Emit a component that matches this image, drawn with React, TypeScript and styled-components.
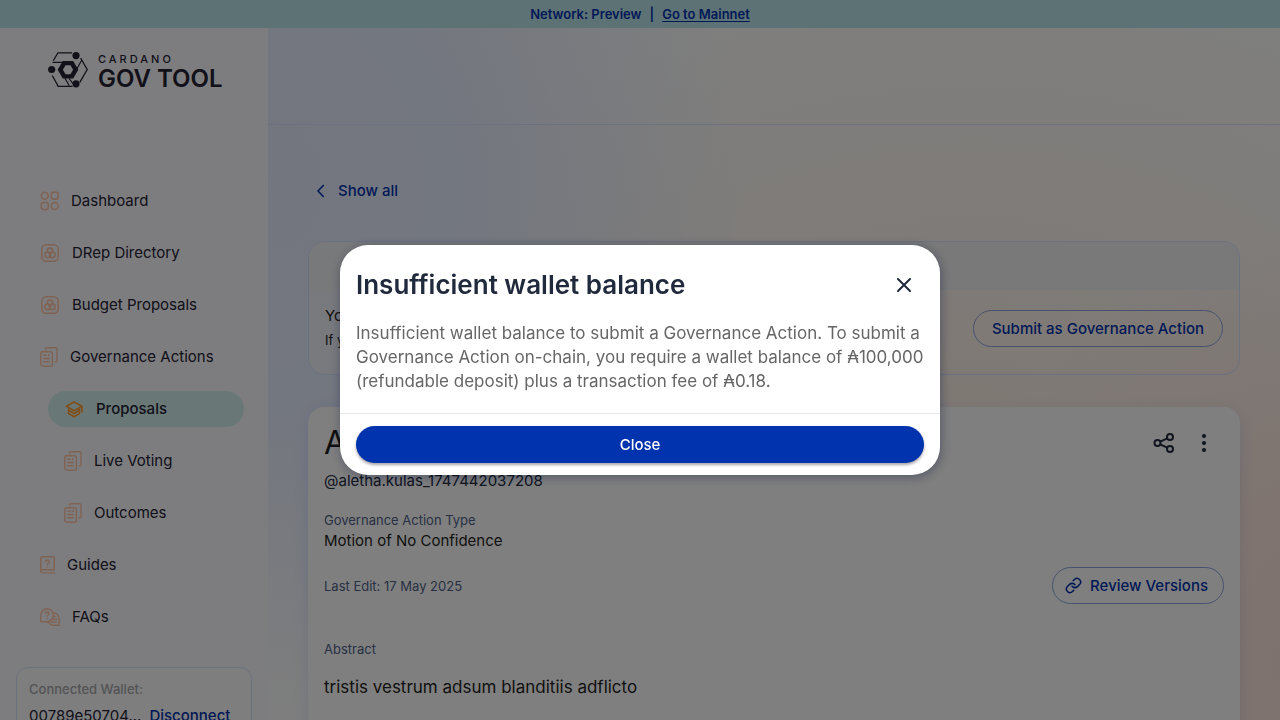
import React from "react";
import styled, { createGlobalStyle, css } from "styled-components";

const color = {
  blue: "#0033ad",
  ink: "#212a3d",
  text: "#242232",
  black: "#1f1f22",
  label: "#506288",
  line: "#d6e2ff",
  peach: "#ffc4a3",
};

const GlobalStyle = createGlobalStyle`
  *, *::before, *::after { box-sizing: border-box; }
  body {
    margin: 0;
    overflow: hidden;
    font-family: Inter, "Liberation Sans", sans-serif;
    font-size: 15px;
    line-height: 20px;
    color: ${color.text};
  }
  h1, h2, p, dl, dt, dd, ul { margin: 0; padding: 0; }
  ul { list-style: none; }
  button { font-family: inherit; cursor: pointer; }
  svg { display: block; flex: none; }
`;

const Page = styled.div`
  height: 100vh;
  display: flex;
  flex-direction: column;
  background:
    radial-gradient(ellipse 38% 76% at 20% 26%, #e6edff 0%, #e7eeff 42%, rgba(240, 245, 255, 0) 100%),
    radial-gradient(ellipse 30% 60% at 104% 92%, #ffe4dc 0%, #ffe8df 35%, rgba(255, 244, 238, 0) 100%),
    radial-gradient(ellipse 52% 60% at 76% 58%, #fff2e8 0%, rgba(255, 250, 246, 0) 100%),
    #fefefd;
`;

const Banner = styled.div`
  flex: none;
  height: 28px;
  display: flex;
  align-items: center;
  justify-content: center;
  gap: 8px;
  background: #bbe4eb;
  color: ${color.blue};
  font-size: 13px;
  font-weight: 600;
`;

const BannerLink = styled.a`
  color: inherit;
  text-underline-offset: 2px;
`;

const Columns = styled.div`
  flex: 1;
  min-height: 0;
  display: flex;
`;

const Sidebar = styled.aside`
  flex: none;
  width: 268px;
  padding: 24px 16px 16px;
  overflow: hidden;
  background: rgba(251, 251, 255, 0.94);
`;

const Logo = styled.a`
  display: flex;
  gap: 10px;
  height: 36px;
  margin: 0 32px 95px;
  color: ${color.text};
  text-decoration: none;
  white-space: nowrap;
`;

const Wordmark = styled.span`
  display: flex;
  flex-direction: column;
  font-size: 11px;
  font-weight: 500;
  line-height: 14px;
  letter-spacing: 3px;
`;

const WordmarkName = styled.strong`
  font-size: 24px;
  font-weight: 600;
  line-height: 26px;
  letter-spacing: normal;
`;

const NavList = styled.ul`
  display: flex;
  flex-direction: column;
  gap: 16px;
  padding: 0 8px;
`;

const NavLink = styled.a<{ $nested?: boolean; $active?: boolean }>`
  display: flex;
  align-items: center;
  gap: 12px;
  height: 36px;
  padding: 0 16px;
  margin-left: ${(p) => (p.$nested ? 24 : 0)}px;
  border-radius: 18px;
  color: ${color.text};
  text-decoration: none;
  white-space: nowrap;
  ${(p) =>
    p.$active &&
    css`
      background: #d2f0ee;
      font-weight: 500;
    `}
`;

const Wallet = styled.section`
  margin-top: 32px;
  padding: 12px;
  border: 1px solid ${color.line};
  border-radius: 12px;
  background: rgba(255, 255, 255, 0.3);
`;

const WalletLabel = styled.p`
  color: #a8a8a8;
  font-size: 13px;
  font-weight: 500;
  line-height: 18px;
`;

const WalletRow = styled.div`
  display: flex;
  align-items: center;
  gap: 8px;
  padding-top: 8px;
`;

const LinkButton = styled.button`
  display: flex;
  align-items: center;
  gap: 8px;
  padding: 0;
  border: 0;
  background: none;
  color: ${color.blue};
  font-size: 15px;
  font-weight: 500;
  line-height: 20px;
`;

const Main = styled.main`
  flex: 1;
  min-width: 0;
  overflow: hidden;
`;

const TopBar = styled.header`
  height: 97px;
  border-bottom: 1px solid ${color.line};
`;

const Content = styled.div`
  display: flex;
  flex-direction: column;
  align-items: stretch;
  padding: 56px 40px 40px;
`;

const BackRow = styled.div`
  display: flex;
  padding-left: 2px;
  margin-bottom: 40px;
`;

const SubmitCard = styled.section`
  border: 1px solid ${color.line};
  border-radius: 16px;
  overflow: hidden;
  margin-bottom: 32px;
`;

const SubmitStrip = styled.div`
  height: 48px;
  background: rgba(242, 242, 243, 0.9);
`;

const SubmitBody = styled.div`
  display: flex;
  align-items: center;
  justify-content: space-between;
  height: 84px;
  padding: 0 16px 8px;
  background: linear-gradient(90deg, rgba(246, 246, 248, 0.7), rgba(255, 255, 255, 0) 60%);
`;

const SubmitText = styled.div`
  display: flex;
  flex-direction: column;
  gap: 4px;
  color: ${color.black};
`;

const Small = styled.p`
  font-size: 13px;
`;

const OutlineButton = styled.button<{ $withIcon?: boolean }>`
  display: flex;
  align-items: center;
  gap: 8px;
  height: 37px;
  padding: 0 ${(p) => (p.$withIcon ? 15 : 18)}px 0 ${(p) => (p.$withIcon ? 12 : 18)}px;
  border: 1px solid #8ca3dc;
  border-radius: 19px;
  background: none;
  color: ${color.blue};
  font-size: 15px;
  font-weight: 500;
  white-space: nowrap;
`;

const ProposalCard = styled.article`
  min-height: 480px;
  padding: 16px;
  border-radius: 16px;
  background: #ffffff;
  box-shadow: 0 4px 15px rgba(47, 98, 220, 0.14);
`;

const CardRow = styled.div<{ $space?: number }>`
  display: flex;
  align-items: center;
  justify-content: space-between;
  padding-bottom: ${(p) => p.$space ?? 0}px;
`;

const ProposalTitle = styled.h1`
  color: ${color.black};
  font-size: 32px;
  font-weight: 400;
  line-height: 40px;
`;

const Actions = styled.div`
  display: flex;
`;

const IconButton = styled.button`
  display: flex;
  align-items: center;
  justify-content: center;
  width: 40px;
  height: 40px;
  padding: 0;
  border: 0;
  background: none;
  color: ${color.ink};
`;

const Author = styled.p`
  padding: 8px 0 20px;
  color: ${color.ink};
`;

const Facts = styled.dl`
  display: flex;
  flex-direction: column;
  gap: 2px;
  padding-bottom: 16px;
  color: ${color.black};
`;

const Term = styled.dt`
  color: ${color.label};
  font-size: 13px;
  line-height: 18px;
`;

const Label = styled.p`
  color: ${color.label};
  font-size: 13px;
  line-height: 18px;
`;

const Abstract = styled.p`
  padding-top: 17px;
  color: ${color.black};
  font-size: 17px;
  line-height: 24px;
`;

const Backdrop = styled.div`
  position: fixed;
  inset: 0;
  display: flex;
  align-items: center;
  justify-content: center;
  padding: 16px;
  background: rgba(0, 0, 0, 0.5);
`;

const Dialog = styled.div`
  width: 600px;
  max-width: 100%;
  border-radius: 28px;
  background: #ffffff;
  box-shadow: 1px 2px 11px rgba(0, 18, 61, 0.37);
`;

const DialogHead = styled.div`
  display: flex;
  align-items: center;
  justify-content: space-between;
  padding: 20px 16px 16px;
`;

const DialogTitle = styled.h2`
  color: ${color.ink};
  font-size: 26px;
  font-weight: 600;
  line-height: 40px;
`;

const DialogText = styled.p`
  padding: 0 8px 20px 16px;
  color: #666666;
  font-size: 17px;
  line-height: 24px;
`;

const DialogFoot = styled.div`
  padding: 12px 16px;
  border-top: 1px solid #e6e7eb;
`;

const PrimaryButton = styled.button`
  width: 100%;
  height: 37px;
  border: 0;
  border-radius: 19px;
  background: ${color.blue};
  color: #ffffff;
  font-size: 15px;
  font-weight: 500;
  box-shadow: 0 2px 3px rgba(0, 0, 0, 0.35);
`;

const LogoMark = () => (
  <svg width="40" height="36" viewBox="0 0 40 36" fill="none" stroke="currentColor" strokeWidth="1.3" aria-hidden="true">
    <path d="M5.300 8.800 9.900.8H24M32.600 6 39.200 17.500 31.800 30.300M24.500 34.300H10.200L4.300 23.500" />
    <path d="M4.500 10.300H14.500M33.800 8 28.200 18M17 26.300 21.300 33.800M21 26.300 24.800 31.500" strokeWidth="1.200" />
    <path d="M14.800 9H25.200L30.300 17.700 25.200 26.400H14.800L9.700 17.700Z" fill="currentColor" stroke="none" />
    <path d="M17.500 13.200H22.500L25.100 17.700 22.500 22.200H17.500L14.900 17.700Z" fill="#fbfbff" stroke="none" />
    <g fill="currentColor" stroke="none">
      <circle cx="3.700" cy="17.500" r="3.600" />
      <circle cx="28" cy="3.600" r="3.600" />
      <circle cx="28" cy="31.800" r="3.600" />
    </g>
  </svg>
);

const DashboardIcon = () => (
  <svg width="19" height="20" viewBox="0 0 19 20" fill="none" stroke={color.peach} strokeWidth="1.500" aria-hidden="true">
    <circle cx="4.750" cy="4.750" r="3.500" />
    <rect x="11.250" y="1.250" width="7" height="7" rx="2.200" />
    <rect x="1.250" y="11.500" width="7" height="7" rx="2.200" />
    <circle cx="14.750" cy="15" r="3.500" />
  </svg>
);

const CirclesIcon = () => (
  <svg width="20" height="20" viewBox="0 0 20 20" fill="none" stroke={color.peach} strokeWidth="1.500" aria-hidden="true">
    <rect x="1.750" y="1.750" width="16.500" height="16.500" rx="4.500" />
    <circle cx="10" cy="7.600" r="2.700" />
    <circle cx="7.700" cy="11.800" r="2.900" />
    <circle cx="12.300" cy="11.800" r="2.900" />
  </svg>
);

const DocsIcon = () => (
  <svg width="18" height="20" viewBox="0 0 18 20" fill="none" stroke={color.peach} strokeWidth="1.400" strokeLinecap="round" aria-hidden="true">
    <rect x=".8" y="4.700" width="11.600" height="14.500" rx="2" />
    <path d="M5.500 2.500C5.600 1.400 6.300.8 7.300.8H15.200C16.300.8 17 1.500 17 2.600V13.200C17 14.300 16.300 15 15.200 15M3.800 8.300H6M8.300 8.300H9.400M3.800 11.500H9.400M3.800 14.700H9.400" />
  </svg>
);

const LayersIcon = () => (
  <svg width="20" height="20" viewBox="0 0 20 20" fill="none" stroke="#ff9d33" strokeWidth="1.600" strokeLinejoin="round" aria-hidden="true">
    <path d="M2.500 7.300 10 3 18 7.300 10 11.700ZM18 7.300V13.500M4.500 9.500V11.300L10 14.500 15.500 11.300V9.500M4.500 12.300V14.500L10 17.700 15.500 14.500V12.300" />
  </svg>
);

const GuideIcon = () => (
  <svg width="15" height="18" viewBox="0 0 15 18" fill="none" stroke={color.peach} strokeWidth="1.400" strokeLinecap="round" aria-hidden="true">
    <path d="M14.300 13.800V2.200C14.300 1.300 13.800.8 13 .8H2.500C1.400.8.8 1.500.8 2.500V15.200M14.300 13.800H2.500C1.400 13.800.8 14.400.8 15.300S1.400 16.900 2.500 16.900H14.300" />
    <path d="M5.600 5.600C5.600 3.400 9.500 3.400 9.500 5.600 9.500 7.200 7.500 7 7.500 8.700M7.500 10.700V10.900" />
  </svg>
);

const FaqIcon = () => (
  <svg width="20" height="18" viewBox="0 0 20 18" fill="none" stroke={color.peach} strokeWidth="1.400" strokeLinecap="round" strokeLinejoin="round" aria-hidden="true">
    <path d="M.8 13.700V7A6.200 6.200 0 0 1 13.200 7 6.400 6.400 0 0 1 7 13.700ZM5.200 5.600C5.200 3.400 9 3.400 9 5.600 9 7.100 7.100 7 7.100 8.500M7.100 10.500V10.700" />
    <path d="M13.400 4.700A6.200 6.200 0 0 1 19.200 11V17.200H13.500A6 6 0 0 1 8.300 14M13.500 8.500H15.700M12.700 11.200H16.500M11.500 14H16.500" />
  </svg>
);

const BackIcon = () => (
  <svg width="20" height="20" viewBox="0 0 20 20" fill="none" stroke="currentColor" strokeWidth="1.600" strokeLinecap="round" strokeLinejoin="round" aria-hidden="true">
    <path d="M13.300 4.500 8 10 13.300 15.500" />
  </svg>
);

const ShareIcon = () => (
  <svg width="24" height="24" viewBox="0 0 24 24" fill="none" stroke="currentColor" strokeWidth="2" aria-hidden="true">
    <circle cx="5.500" cy="12" r="3" />
    <circle cx="18" cy="6" r="3" />
    <circle cx="18" cy="18" r="3" />
    <path d="M8.200 10.700 15.300 7.300M8.200 13.300 15.300 16.700" />
  </svg>
);

const MoreIcon = () => (
  <svg width="24" height="24" viewBox="0 0 24 24" fill="currentColor" aria-hidden="true">
    <circle cx="12" cy="5" r="2.100" />
    <circle cx="12" cy="12" r="2.100" />
    <circle cx="12" cy="19" r="2.100" />
  </svg>
);

const ChainIcon = () => (
  <svg width="17" height="17" viewBox="0 0 24 24" fill="none" stroke="currentColor" strokeWidth="2.200" strokeLinecap="round" strokeLinejoin="round" aria-hidden="true">
    <path d="M10 13a5 5 0 0 0 7.540.540l3-3a5 5 0 0 0-7.070-7.070l-1.720 1.710" />
    <path d="M14 11a5 5 0 0 0-7.540-.540l-3 3a5 5 0 0 0 7.070 7.070l1.710-1.710" />
  </svg>
);

const CloseIcon = () => (
  <svg width="24" height="24" viewBox="0 0 24 24" fill="none" stroke="currentColor" strokeWidth="2" strokeLinecap="round" aria-hidden="true">
    <path d="M6 6 18 18M18 6 6 18" />
  </svg>
);

type NavItem = { label: string; Icon: React.FC; nested?: boolean; active?: boolean };

const navItems: NavItem[] = [
  { label: "Dashboard", Icon: DashboardIcon },
  { label: "DRep Directory", Icon: CirclesIcon },
  { label: "Budget Proposals", Icon: CirclesIcon },
  { label: "Governance Actions", Icon: DocsIcon },
  { label: "Proposals", Icon: LayersIcon, nested: true, active: true },
  { label: "Live Voting", Icon: DocsIcon, nested: true },
  { label: "Outcomes", Icon: DocsIcon, nested: true },
  { label: "Guides", Icon: GuideIcon },
  { label: "FAQs", Icon: FaqIcon },
];

export default function App() {
  return (
    <>
      <GlobalStyle />
      <Page>
        <Banner>
          <span>Network: Preview</span>
          <span>|</span>
          <BannerLink href="#mainnet">Go to Mainnet</BannerLink>
        </Banner>
        <Columns>
          <Sidebar>
            <Logo href="#home">
              <LogoMark />
              <Wordmark>
                CARDANO
                <WordmarkName>GOV TOOL</WordmarkName>
              </Wordmark>
            </Logo>
            <nav>
              <NavList>
                {navItems.map(({ label, Icon, nested, active }) => (
                  <li key={label}>
                    <NavLink href="#nav" $nested={nested} $active={active} aria-current={active ? "page" : undefined}>
                      <Icon />
                      {label}
                    </NavLink>
                  </li>
                ))}
              </NavList>
            </nav>
            <Wallet>
              <WalletLabel>Connected Wallet:</WalletLabel>
              <WalletRow>
                <span>00789e50704...</span>
                <LinkButton type="button">Disconnect</LinkButton>
              </WalletRow>
            </Wallet>
          </Sidebar>
          <Main>
            <TopBar />
            <Content>
              <BackRow>
                <LinkButton type="button">
                  <BackIcon />
                  Show all
                </LinkButton>
              </BackRow>
              <SubmitCard>
                <SubmitStrip />
                <SubmitBody>
                  <SubmitText>
                    <p>You</p>
                    <Small>If you</Small>
                  </SubmitText>
                  <OutlineButton type="button">Submit as Governance Action</OutlineButton>
                </SubmitBody>
              </SubmitCard>
              <ProposalCard>
                <CardRow>
                  <ProposalTitle>Ad</ProposalTitle>
                  <Actions>
                    <IconButton type="button" aria-label="Share">
                      <ShareIcon />
                    </IconButton>
                    <IconButton type="button" aria-label="More">
                      <MoreIcon />
                    </IconButton>
                  </Actions>
                </CardRow>
                <Author>@aletha.kulas_1747442037208</Author>
                <Facts>
                  <Term>Governance Action Type</Term>
                  <dd>Motion of No Confidence</dd>
                </Facts>
                <CardRow $space={36}>
                  <Label>Last Edit: 17 May 2025</Label>
                  <OutlineButton type="button" $withIcon>
                    <ChainIcon />
                    Review Versions
                  </OutlineButton>
                </CardRow>
                <Label>Abstract</Label>
                <Abstract>tristis vestrum adsum blanditiis adflicto</Abstract>
              </ProposalCard>
            </Content>
          </Main>
        </Columns>
      </Page>
      <Backdrop>
        <Dialog role="dialog" aria-modal="true" aria-labelledby="dialog-title">
          <DialogHead>
            <DialogTitle id="dialog-title">Insufficient wallet balance</DialogTitle>
            <IconButton type="button" aria-label="Dismiss">
              <CloseIcon />
            </IconButton>
          </DialogHead>
          <DialogText>
            Insufficient wallet balance to submit a Governance Action. To submit a Governance Action on-chain, you
            require a wallet balance of ₳100,000 (refundable deposit) plus a transaction fee of ₳0.18.
          </DialogText>
          <DialogFoot>
            <PrimaryButton type="button">Close</PrimaryButton>
          </DialogFoot>
        </Dialog>
      </Backdrop>
    </>
  );
}
